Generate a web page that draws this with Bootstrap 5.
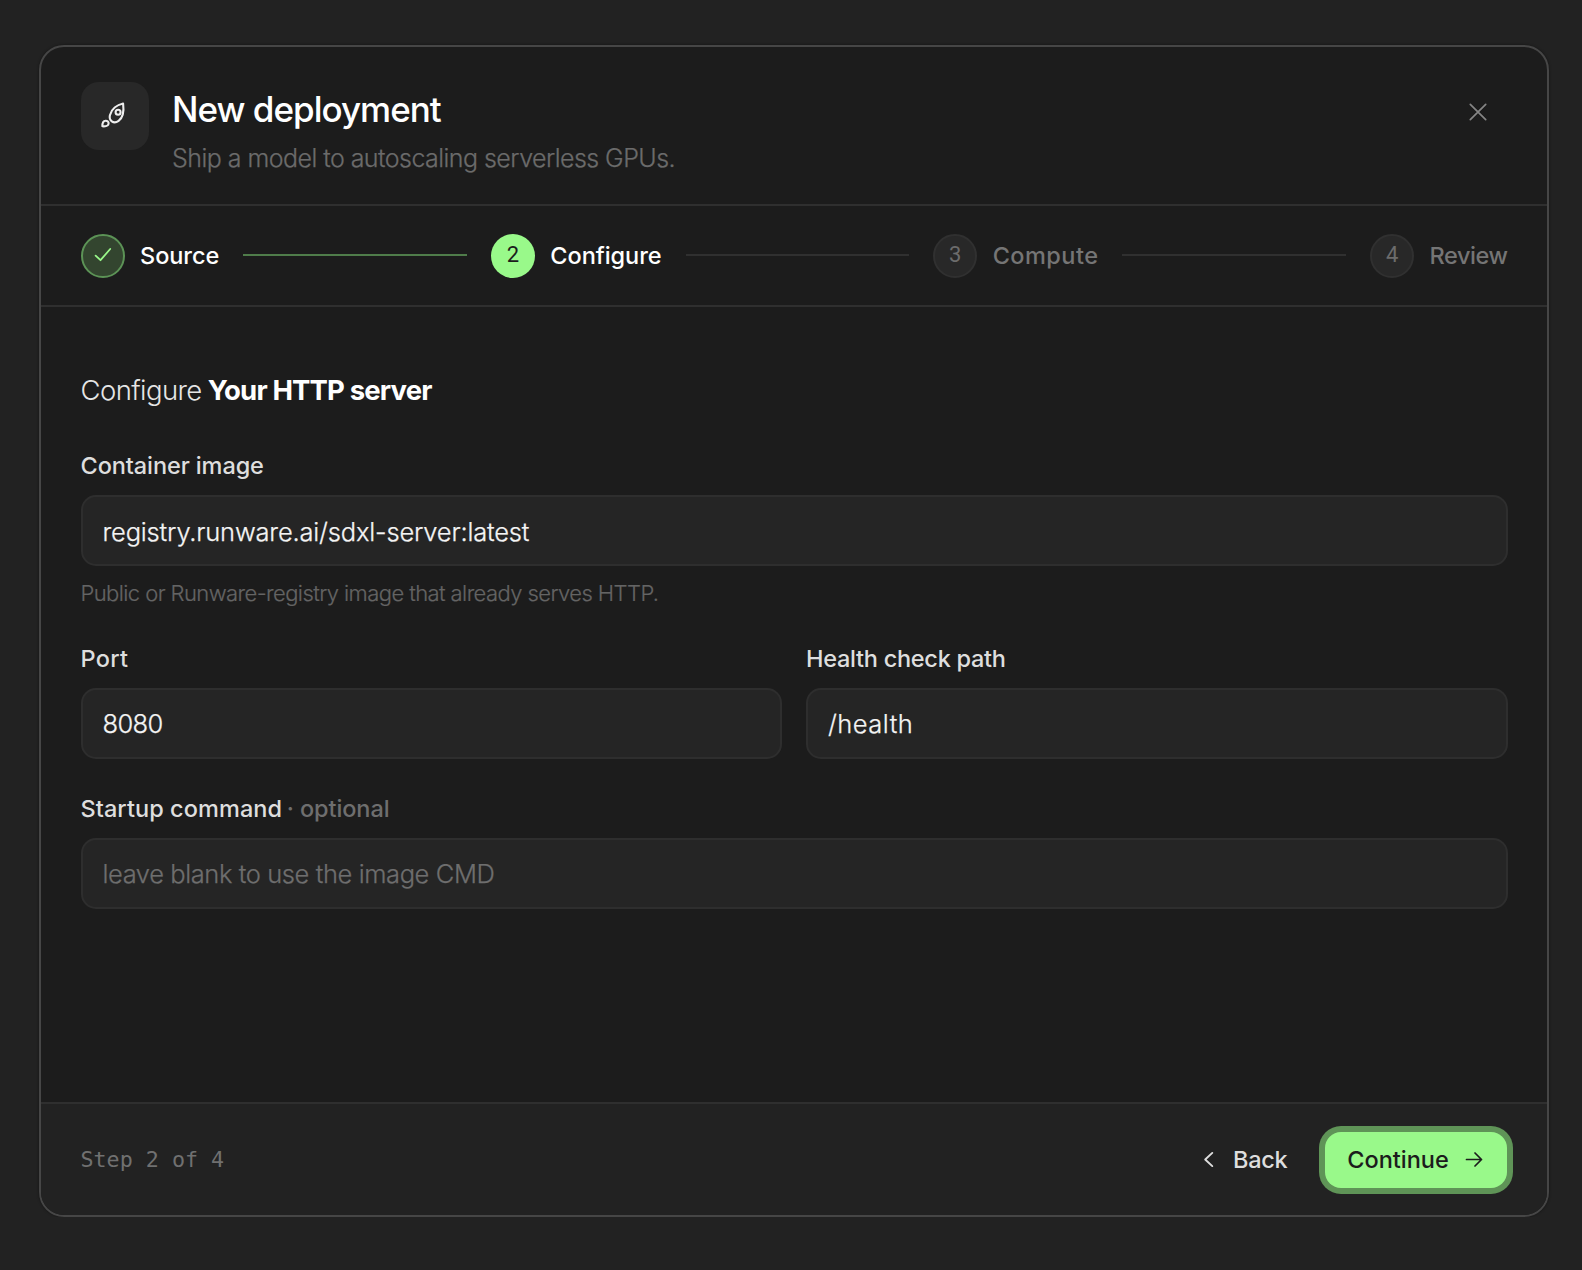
<!DOCTYPE html>
<html lang="en" data-bs-theme="dark">
<head>
<meta charset="utf-8">
<meta name="viewport" content="width=device-width, initial-scale=1">
<title>New deployment</title>
<link href="https://cdn.jsdelivr.net/npm/bootstrap@5.3.0/dist/css/bootstrap.min.css" rel="stylesheet">
<style>
  body { background: #222; font-family: Inter, "Liberation Sans", sans-serif; padding: 45px 33px 0 39px; color: #fff; }
  .wizard { width: 1510px; height: 1172px; background: #1c1c1c; border: 2px solid #464646; border-radius: 25px; box-shadow: 0 0 3px rgba(0,0,0,.45); overflow: hidden; }
  .wizard-head { height: 159px; padding: 35px 39.5px 0; border-bottom: 2px solid #2f2f2f; }
  .wizard-icon { width: 68px; height: 68px; border-radius: 18px; background: #282828; color: #ededed; }
  .wizard-titles { margin-left: 23.5px; padding-top: 6px; }
  .wizard-title { font-size: 35px; line-height: 42px; font-weight: 500; letter-spacing: -.0285em; }
  .wizard-sub { font-size: 25px; line-height: 32px; font-weight: 300; letter-spacing: -.0217em; color: #6b6b6b; margin-top: 12px; -webkit-text-stroke: .25px currentColor; }
  .wizard-close { width: 32px; height: 32px; margin: 14px 14px 0 0; color: #858585; background: none; border: 0; }
  .steps { height: 101px; padding: 0 39.5px 0; gap: 24px; border-bottom: 2px solid #2f2f2f; }
  .step { gap: 15.5px; font-size: 23.5px; font-weight: 500; line-height: 30px; letter-spacing: -.002em; }
  .step-label { padding-top: 1px; }
  .step-dot { width: 44px; height: 44px; font-family: Roboto, Inter, sans-serif; font-size: 22px; font-weight: 400; padding-bottom: 1px; }
  .step-done .step-dot { background: #33452f; border: 2px solid #5c9356; color: #99f98a; }
  .step-now .step-dot { background: #99f98a; color: #1c1c1c; }
  .step-next { color: #757575; }
  .step-next .step-dot { background: #282828; border: 2px solid #303030; color: #6c6c6c; }
  .step-line { height: 2px; background: #303030; margin-top: -1px; }
  .step-line-done { background: #4f7c4a; }
  .wizard-body { padding: 63px 39.5px 0; }
  .body-title { font-size: 27.5px; line-height: 40px; font-weight: 300; color: #e6e6e6; letter-spacing: -.0215em; margin-bottom: 41px; }
  .body-title strong { font-weight: 700; color: #fff; letter-spacing: -.031em; margin-left: -1px; }
  .field-label { font-size: 23.5px; line-height: 30px; font-weight: 500; color: #dedede; margin-bottom: 14px; letter-spacing: -.004em; }
  .field-opt { color: #6e6e6e; margin-left: -1.5px; }
  .wizard .form-control { height: 71px; border: 2px solid #2e2e2e; border-radius: 15px; background: #252525; color: #f4f4f4; font-size: 25.5px; font-weight: 300; padding: 0 20px; -webkit-text-stroke: .25px currentColor; }
  .wizard #image { padding-top: 1px; }
  .wizard .form-control::placeholder { color: #6e6e6e; opacity: 1; }
  .field-help { font-size: 22px; line-height: 28px; font-weight: 300; letter-spacing: -.0265em; color: #646464; margin: 13px 0 37px; -webkit-text-stroke: .2px currentColor; }
  .field-pair { gap: 24px; margin-bottom: 35px; }
  .wizard-foot { height: 113px; padding: 0 40px 0 39.5px; background: #222; border-top: 2px solid #2f2f2f; }
  .foot-count { font-family: "DejaVu Sans Mono", monospace; font-size: 21.7px; color: #707070; padding-top: 1px; }
  .wizard-foot .btn { font-size: 23.5px; font-weight: 500; line-height: 30px; height: 56px; border: 0; padding: 1px 0 0; }
  .wizard-foot .btn-back { color: #dedede; gap: 19px; margin-right: 37.5px; letter-spacing: -.01em; }
  .wizard-foot .btn-go { width: 182px; background: #99f98a; color: #1c1c1c; border-radius: 16px; box-shadow: 0 0 0 6px #5f9457; gap: 16px; padding-right: 2px; }
</style>
</head>
<body>
<main class="wizard d-flex flex-column">
  <header class="wizard-head d-flex align-items-start flex-shrink-0">
    <div class="wizard-icon d-flex align-items-center justify-content-center">
      <svg width="32" height="32" viewBox="0.5 0 32 32" fill="none" stroke="currentColor" stroke-width="2.1" stroke-linejoin="round" stroke-linecap="round">
        <path d="M24.600 3.600C18.500 5 12.800 9.200 11.400 15.200c-.6 2.600.2 4.800 1.900 6.100 1.900 1.400 4.400 1.300 6.800-.4 4.600-3.400 5.400-10.400 4.500-17.300z"/>
        <circle cx="19.600" cy="12.200" r="2.500"/>
        <path d="M3.900 26.300c-.1-3.100 1-5.300 3.200-5.500 1.900-.1 3.100 1.200 3 2.700-.2 2.200-2.800 3.100-6.200 2.800z"/>
      </svg>
    </div>
    <div class="wizard-titles flex-grow-1">
      <h1 class="wizard-title mb-0">New deployment</h1>
      <p class="wizard-sub mb-0">Ship a model to autoscaling serverless GPUs.</p>
    </div>
    <button class="wizard-close d-flex align-items-center justify-content-center p-0" type="button" aria-label="Close">
      <svg width="18" height="18" viewBox="0 0 18 18" fill="none" stroke="currentColor" stroke-width="1.700" stroke-linecap="round"><path d="M1.300 1.300l15.400 15.400M16.700 1.300L1.300 16.700"/></svg>
    </button>
  </header>

  <nav class="steps d-flex align-items-center flex-shrink-0" aria-label="Progress">
    <div class="step step-done d-flex align-items-center">
      <span class="step-dot rounded-circle d-flex align-items-center justify-content-center">
        <svg width="18" height="16" viewBox="0 0 18 16" fill="none" stroke="currentColor" stroke-width="1.800" stroke-linecap="round" stroke-linejoin="round"><path d="M1.600 8.600l4.900 4.600L16.200 2"/></svg>
      </span>
      <span class="step-label">Source</span>
    </div>
    <div class="step-line step-line-done flex-fill"></div>
    <div class="step step-now d-flex align-items-center">
      <span class="step-dot rounded-circle d-flex align-items-center justify-content-center">2</span>
      <span class="step-label">Configure</span>
    </div>
    <div class="step-line flex-fill"></div>
    <div class="step step-next d-flex align-items-center">
      <span class="step-dot rounded-circle d-flex align-items-center justify-content-center">3</span>
      <span class="step-label" style="letter-spacing:.02em">Compute</span>
    </div>
    <div class="step-line flex-fill"></div>
    <div class="step step-next d-flex align-items-center">
      <span class="step-dot rounded-circle d-flex align-items-center justify-content-center">4</span>
      <span class="step-label" style="letter-spacing:-.019em">Review</span>
    </div>
  </nav>

  <form class="wizard-body flex-grow-1">
    <h2 class="body-title">Configure <strong>Your HTTP server</strong></h2>

    <label class="field-label d-block" for="image">Container image</label>
    <input class="form-control" id="image" style="letter-spacing:-.0072em" value="registry.runware.ai/sdxl-server:latest">
    <p class="field-help">Public or Runware-registry image that already serves HTTP.</p>

    <div class="field-pair d-flex">
      <div class="flex-fill w-50">
        <label class="field-label d-block" for="port" style="letter-spacing:.012em">Port</label>
        <input class="form-control" id="port" style="letter-spacing:-.024em" value="8080">
      </div>
      <div class="flex-fill w-50">
        <label class="field-label d-block" for="health" style="letter-spacing:-.0115em">Health check path</label>
        <input class="form-control" id="health" style="letter-spacing:.018em" value="/health">
      </div>
    </div>

    <label class="field-label d-block" for="cmd"><span style="letter-spacing:.003em">Startup command</span> <span class="field-opt">· optional</span></label>
    <input class="form-control" id="cmd" style="letter-spacing:-.016em" placeholder="leave blank to use the image CMD">
  </form>

  <footer class="wizard-foot d-flex align-items-center flex-shrink-0">
    <span class="foot-count me-auto">Step 2 of 4</span>
    <button class="btn btn-back d-flex align-items-center" type="button">
      <svg width="11" height="18" viewBox="0 0 11 18" fill="none" stroke="currentColor" stroke-width="1.900" stroke-linecap="round" stroke-linejoin="round"><path d="M9.300 1.900L2.200 8.500l7.100 6.600"/></svg>
      Back
    </button>
    <button class="btn btn-go d-flex align-items-center justify-content-center" type="button">
      Continue
      <svg width="18" height="16" viewBox="0 0 18 16" fill="none" stroke="currentColor" stroke-width="1.700" stroke-linecap="round" stroke-linejoin="round"><path d="M1.500 7.500h15M10 1l6.500 6.500L10 14"/></svg>
    </button>
  </footer>
</main>
<script src="https://cdn.jsdelivr.net/npm/bootstrap@5.3.0/dist/js/bootstrap.bundle.min.js"></script>
</body>
</html>
